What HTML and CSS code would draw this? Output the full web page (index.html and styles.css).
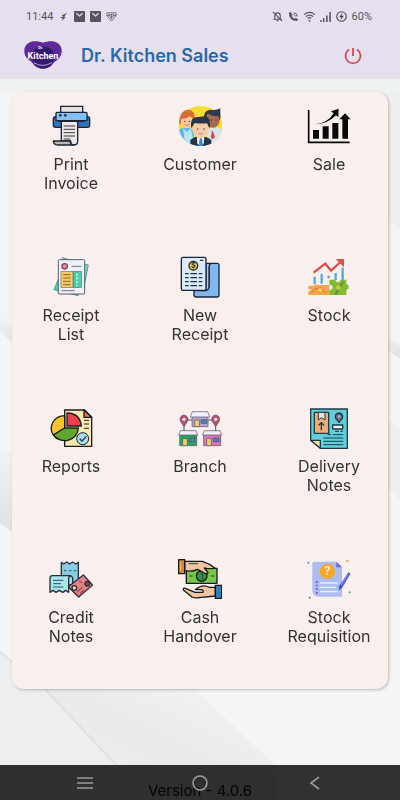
FILE: index.html
```html
<!DOCTYPE html>
<html lang="en">
<head>
    <meta charset="UTF-8">
    <meta name="viewport" content="width=device-width, initial-scale=1.0">
    <title>Dr. Kitchen Sales</title>
    <link rel="stylesheet" href="styles.css">
</head>
<body>
    <svg class="backdrop" viewBox="0 0 400 800" preserveAspectRatio="none" aria-hidden="true">
        <defs>
            <linearGradient id="fold" x1="0" y1="1" x2="1" y2="0">
                <stop offset="0" stop-color="#f1f1f1"/>
                <stop offset="0.5" stop-color="#e9eaea"/>
                <stop offset="1" stop-color="#f5f5f5"/>
            </linearGradient>
            <linearGradient id="shade" x1="0" y1="0" x2="0" y2="1">
                <stop offset="0" stop-color="#f3f3f3"/>
                <stop offset="1" stop-color="#e0e1e1"/>
            </linearGradient>
        </defs>
        <rect width="400" height="800" fill="#f5f5f5"/>
        <path d="M0 79H400V92H0z" fill="#eff3ef"/>
        <path d="M0 92H20V343L0 329z" fill="#f3f4f3"/>
        <path d="M0 315L20 335V350L0 331z" fill="url(#shade)"/>
        <path d="M0 445L20 460V536L0 524z" fill="url(#shade)"/>
        <path d="M0 652L45 689L116 765V800H0z" fill="#eeeeee"/>
        <path d="M45 689H195L275 765V800H116V765z" fill="url(#fold)"/>
        <path d="M0 652L45 689L116 765" fill="none" stroke="#dfe1e1" stroke-width="2"/>
        <path d="M380 92H400V228L380 218z" fill="#eeefef"/>
        <path d="M380 332L400 346V358L380 346z" fill="url(#shade)"/>
        <path d="M380 412L400 428V500L380 480z" fill="#eeefef"/>
    </svg>

    <header class="header">
        <div class="status-bar">
            <div class="status-group">
                <span>11:44</span>
                <svg class="status-icon" viewBox="0 0 12 12"><path d="M10 2L4 5l2 1-4 1 3 1-1 3 4-4-1-1z" fill="#57525c"/></svg>
                <svg class="status-icon" viewBox="0 0 12 12"><rect x="0" y="0" width="12" height="12" rx="1" fill="#57525c"/><path d="M2.500 2.500L6 5.500l3.500-3" fill="none" stroke="#e6e0ee" stroke-width="1.300"/></svg>
                <svg class="status-icon" viewBox="0 0 12 12"><rect x="0" y="0" width="12" height="12" rx="1" fill="#57525c"/><path d="M2.500 2.500L6 5.500l3.500-3" fill="none" stroke="#e6e0ee" stroke-width="1.300"/></svg>
                <svg class="status-icon" viewBox="0 0 12 12"><path d="M1 2h10v3L6 11 1 5zM3 4h6L6 8zM6 4v5M1 5h3m4 0h3" fill="none" stroke="#6b6670" stroke-width="1"/></svg>
            </div>
            <div class="status-group status-right">
                <svg class="status-icon" viewBox="0 0 12 12"><path d="M3 9V5q0-3 3-3t3 3v4M1.500 9h9M5 10.500h2M1 1l10 10" fill="none" stroke="#57525c" stroke-width="1.200"/></svg>
                <svg class="status-icon" viewBox="0 0 12 12"><path d="M1 2l2-1 2 3-1 1.500q1 2 3 3L8.500 7.500 11 9l-1 2Q1 11 1 2z" fill="#57525c"/><path d="M6 2q4 0 4 4M6 4q2 0 2 2" fill="none" stroke="#57525c"/></svg>
                <svg class="status-icon" viewBox="0 0 12 12"><path d="M0 4q6-5 12 0M2 6q4-3 8 0M4 8q2-1.500 4 0" fill="none" stroke="#57525c" stroke-width="1.300"/><circle cx="6" cy="10.500" r="1" fill="#57525c"/></svg>
                <svg class="status-icon" viewBox="0 0 12 12"><path d="M1 12v-2M4 12V8M7.500 12V5M11 12V1" stroke="#57525c" stroke-width="1.700"/></svg>
                <svg class="status-icon" viewBox="0 0 12 12"><circle cx="6" cy="6" r="5.200" fill="none" stroke="#57525c" stroke-width="1.300"/><path d="M7 2L3.500 6.700H6L5 10l3.500-4.700H6z" fill="#3d3942"/></svg>
                <span>60%</span>
            </div>
        </div>
        <div class="title-bar">
            <svg class="logo" viewBox="0 0 114 86" role="img" aria-label="Dr. Kitchen">
                <path d="M57 5C44-1 26-1 16 4-2 12-3 36 8 50c6 9 14 10 19 18 12 20 48 20 60 0 5-8 13-9 19-18 11-14 10-38-8-46-10-5-28-5-41 1z" fill="#5e2a9b"/>
                <path d="M57 16c22 0 34 14 34 30 0 20-18 36-34 36S23 66 23 46c0-16 12-30 34-30z" fill="#33196c"/>
                <path d="M30 65q27 16 54-1" fill="none" stroke="#b9a4df" stroke-width="3"/>
                <text x="50" y="23" text-anchor="middle" class="logo-small">Dr.</text>
                <text x="57" y="53" text-anchor="middle" class="logo-text">Kitchen</text>
            </svg>
            <h1>Dr. Kitchen Sales</h1>
            <button type="button" class="power-btn" aria-label="Log out">
                <svg viewBox="0 0 18 18"><path d="M9 1v8M5 2.500a7.500 7.500 0 1 0 8 0" fill="none" stroke="#cf4a58" stroke-width="1.800"/></svg>
            </button>
        </div>
    </header>

    <main class="menu-card">
        <button type="button" class="menu-item">
            <svg class="menu-icon" viewBox="0 0 132 132">
                <g stroke="#1c2430" stroke-width="4" stroke-linejoin="round">
                    <rect x="13" y="38" width="109" height="32" rx="7" fill="#2f73bb"/>
                    <rect x="21" y="25" width="93" height="25" rx="3" fill="#82bff5"/>
                    <path d="M35 25V7h66v18z" fill="#e9e2e1"/>
                    <path d="M37 52h49v60q0 11-11 11-10 0-10-12H37z" fill="#eee7e6"/>
                    <path d="M13 111h50q1 12 12 12H27q-13 0-14-12z" fill="#bdb7b8"/>
                    <path d="M28 52h76" fill="none"/>
                </g>
                <path d="M39 54h45v10H39z" fill="#eee7e6"/>
                <g fill="#17304f"><circle cx="34" cy="34" r="4"/><circle cx="49" cy="34" r="4"/></g>
                <path d="M44 66h34M44 76h34M44 86h34M44 96h34M44 105h20" stroke="#39393d" stroke-width="3"/>
            </svg>
            <span>Print Invoice</span>
        </button>

        <button type="button" class="menu-item">
            <svg class="menu-icon" viewBox="0 0 132 132">
                <defs><clipPath id="people"><ellipse cx="68" cy="66" rx="66" ry="60"/></clipPath></defs>
                <ellipse cx="68" cy="66" rx="66" ry="60" fill="#fbdc35"/>
                <g clip-path="url(#people)">
                    <path d="M0 80q24-20 48 0v50H0z" fill="#56b7ea"/>
                    <path d="M15 72l12 12 11-12 12 50H22z" fill="#b7e4f5"/>
                    <path d="M88 78q26-18 46 0v50H84z" fill="#d7e6ee"/>
                    <path d="M101 78l6 8 4 14-7 6-6-6 3-14z" fill="#d94552"/>
                </g>
                <ellipse cx="28" cy="53" rx="18" ry="20" fill="#f7c7a0"/>
                <path d="M4 60C0 10 48 6 50 38l-2 14q-4-12-12-15Q24 46 10 45l-2 17z" fill="#d96d38"/>
                <ellipse cx="105" cy="48" rx="20" ry="23" fill="#a66a50"/>
                <path d="M79 43q-4-23 17-26 17 4 31-4v13q3 13-3 24l-3-14q-17 2-31-6-4 5-5 15z" fill="#30384b"/>
                <g clip-path="url(#people)">
                    <path d="M37 108q30-24 63 0v24H37z" fill="#26364a"/>
                    <path d="M57 96h22l-2 22-9 12-10-12z" fill="#fff"/>
                    <path d="M65 103h7l3 23H62z" fill="#3289c7"/>
                </g>
                <ellipse cx="68" cy="77" rx="25" ry="26" fill="#f9cdaa"/>
                <path d="M40 73Q34 38 61 39l22-3q18 8 12 37-6-8-7-15-20 2-38-1-5 8-10 16z" fill="#27344a"/>
                <g fill="#37313b"><circle cx="59" cy="75" r="2"/><circle cx="78" cy="75" r="2"/><circle cx="20" cy="52" r="2"/><circle cx="34" cy="52" r="2"/><circle cx="100" cy="48" r="2"/><circle cx="114" cy="48" r="2"/></g>
                <path d="M61 88q7 5 14 0M22 62q6 4 11 0M101 60q6 4 11 0" fill="none" stroke="#c94f4a" stroke-width="2"/>
            </svg>
            <span>Customer</span>
        </button>

        <button type="button" class="menu-item">
            <svg class="menu-icon" viewBox="0 0 132 132">
                <path d="M5 18v97h123" fill="none" stroke="#080808" stroke-width="5"/>
                <path d="M18 78h18v26H18zM47 67h18v37H47zM76 57h18v47H76zM106 44h17v60h-17zM114 28l17 18H97zM24 61q38-3 56-33l-8-6 23-8-1 26-7-6Q64 59 24 61z" fill="#080808"/>
            </svg>
            <span>Sale</span>
        </button>

        <button type="button" class="menu-item">
            <svg class="menu-icon" viewBox="0 0 132 132">
                <g stroke="#4f6673" stroke-width="2" stroke-linejoin="round">
                    <path d="M40 8l78 22-15 77-60-8z" fill="#75d9bd"/>
                    <path d="M30 67L15 104l72 18 12-30z" fill="#4ed0a9"/>
                    <rect x="28" y="14" width="79" height="103" rx="3" fill="#f0eff5" stroke-width="3"/>
                </g>
                <circle cx="47" cy="34" r="8" fill="#e98fa0" stroke="#863d59" stroke-width="4"/>
                <path d="M68 34h29M37 107h40" stroke="#6c7181" stroke-width="3"/>
                <rect x="36" y="50" width="36" height="47" fill="#f4cc62" stroke="#6b6d5a" stroke-width="2"/>
                <rect x="73" y="50" width="24" height="47" fill="#48d0ae" stroke="#4d756b" stroke-width="2"/>
                <path d="M42 59h23M42 69h23M42 79h23M42 89h23" stroke="#806c36" stroke-width="3"/>
                <path d="M84 56v36" stroke="#e7fff8" stroke-width="4" stroke-dasharray="6 5"/>
            </svg>
            <span>Receipt List</span>
        </button>

        <button type="button" class="menu-item">
            <svg class="menu-icon" viewBox="0 0 132 132">
                <g stroke="#17243b" stroke-width="4" stroke-linejoin="round">
                    <path d="M48 107h28q13 0 17-12V31q1-6 8-6h17q5 0 5 6v89q0 6-6 6H55q-7 0-7-7z" fill="#80b8ee"/>
                    <path d="M84 25h15q-6 3-6 11v58q0 13-14 13h-7l12-14z" fill="#a6d0f7"/>
                    <rect x="10" y="7" width="74" height="99" rx="5" fill="#dbeaf9"/>
                    <circle cx="46" cy="32" r="13" fill="#f3cc32"/>
                </g>
                <text x="46" y="40" text-anchor="middle" class="coin">$</text>
                <path d="M21 56h11m5 0h20m5 0h11M21 68h11m5 0h20m5 0h11M21 80h11m5 0h20m5 0h11M21 92h11m5 0h20m5 0h11M66 16h10" stroke="#27344a" stroke-width="4"/>
            </svg>
            <span>New Receipt</span>
        </button>

        <button type="button" class="menu-item">
            <svg class="menu-icon" viewBox="0 0 132 132">
                <path d="M23 88V65M44 86V56M65 70v-8M86 75V54M107 75V38" stroke="#58a8d8" stroke-width="7"/>
                <path d="M20 53l35-27 17 21 30-27" fill="none" stroke="#df5148" stroke-width="7"/>
                <path d="M86 12h25v25z" fill="#df5148"/>
                <path d="M4 94q10-2 17-2 4-6 13-2h33v30H4V109l10-4-10-4z" fill="#f5a549"/>
                <path d="M14 114l10-13h19l15 13" fill="none" stroke="#ca7439" stroke-width="3"/>
                <circle cx="39" cy="106" r="8" fill="#ffc65a" stroke="#d57c35" stroke-width="2"/>
                <path d="M67 74h18q2 8 8 8t8-8h17v14q7 0 7 8t-7 8v16H67v-15q10-1 10-8t-10-8z" fill="#85ba32"/>
                <path d="M80 119l29-44v11l-20 34z" fill="#549e36"/>
                <circle cx="94" cy="98" r="7" fill="#c5c936"/>
            </svg>
            <span>Stock</span>
        </button>

        <button type="button" class="menu-item">
            <svg class="menu-icon" viewBox="0 0 132 132">
                <g stroke="#1b1d20" stroke-width="4" stroke-linejoin="round">
                    <path d="M47 12h60l21 22v87H47z" fill="#f8e8b2"/>
                    <path d="M105 12v22h23z" fill="#ee7445"/>
                    <path d="M47 66V29a41 38 0 0 0-34 58z" fill="#f5c426"/>
                    <path d="M47 66L13 87a41 38 0 0 0 75-21z" fill="#62a52c"/>
                    <path d="M54 60V21q39 1 43 39z" fill="#ee3f4d"/>
                    <circle cx="101" cy="98" r="18" fill="#a5e0f4" stroke-width="3"/>
                </g>
                <path d="M105 43h15M105 54h15M105 67h15" stroke="#252525" stroke-width="3"/>
                <path d="M92 98l7 7 13-14" fill="none" stroke="#203a49" stroke-width="4"/>
            </svg>
            <span>Reports</span>
        </button>

        <button type="button" class="menu-item">
            <svg class="menu-icon" viewBox="0 0 132 132">
                <path d="M18 76V42h95v34" fill="none" stroke="#5a5068" stroke-width="3"/>
                <g stroke="#554d68" stroke-width="2">
                    <path d="M42 31h48v31H42z" fill="#b6a6cf"/>
                    <path d="M5 85h51v34H5z" fill="#28a45a"/>
                    <path d="M77 85h51v34H77z" fill="#dc72b7"/>
                    <path d="M43 17h46l6 16H37zM7 74h47l5 13H2zM79 74h47l5 13H73z" fill="#f0f0fa"/>
                    <path d="M50 42h14v20H50zM14 98h14v21H14zM86 98h14v21H86z" fill="#f2ce70"/>
                    <path d="M69 41h17v11H69zM34 96h16v11H34zM106 96h17v11h-17z" fill="#4388b6"/>
                    <path d="M18 62L7 45q-4-15 11-18 15 3 11 18zM113 62l-11-17q-4-15 11-18 15 3 11 18z" fill="#b45370"/>
                </g>
                <circle cx="18" cy="40" r="5" fill="#efe1e5"/>
                <circle cx="113" cy="40" r="5" fill="#efe1e5"/>
            </svg>
            <span>Branch</span>
        </button>

        <button type="button" class="menu-item">
            <svg class="menu-icon" viewBox="0 0 132 132">
                <g stroke="#21394a" stroke-width="4" stroke-linejoin="round">
                    <path d="M11 9h110v118H40L11 103z" fill="#61ced9"/>
                    <path d="M11 103h29v24z" fill="#f7dd9a"/>
                    <path d="M22 19h43v63H22z" fill="#efae70"/>
                    <path d="M34 19h20v23l-10-7-10 7z" fill="#e6e5e5" stroke-width="3"/>
                    <path d="M77 57h30v12H77z" fill="#e2f7fa"/>
                    <path d="M96 49L86 37q-4-14 10-16 14 2 10 16z" fill="#856078"/>
                </g>
                <circle cx="96" cy="32" r="4" fill="#61ced9"/>
                <path d="M43 73V50m-8 8l8-8 8 8" fill="none" stroke="#21394a" stroke-width="4"/>
                <path d="M84 76h12m4 0h8M62 86h10m5 0h32M49 96h60M49 106h60M49 116h60" stroke="#21394a" stroke-width="3"/>
            </svg>
            <span>Delivery Notes</span>
        </button>

        <button type="button" class="menu-item">
            <svg class="menu-icon" viewBox="0 0 132 132">
                <g stroke="#26313a" stroke-width="4" stroke-linejoin="round">
                    <path d="M37 16l7 5 9-6 9 6 9-6 9 6 8-5v70H37z" fill="#8ccce2"/>
                    <path d="M3 106V63q0-7 7-7h51q10 0 10 11v17H59v22l-9-6-9 6-10-6-10 6-9-6z" fill="#a9e5eb"/>
                    <path d="M59 84V66q0-9 6-9" fill="none"/>
                    <path d="M103 54l28 30-42 36-31-31z" fill="#e98085"/>
                    <circle cx="76" cy="93" r="7" fill="#f5d5bd"/>
                    <circle cx="115" cy="80" r="7" fill="#8d4b5b"/>
                </g>
                <path d="M45 41h7m8 0h7m7 0h8M12 70h31M12 80h24M12 90h31" stroke="#315461" stroke-width="3"/>
                <path d="M85 104l15-13M93 110l12-11M91 72l7 5" stroke="#682f3b" stroke-width="3"/>
            </svg>
            <span>Credit Notes</span>
        </button>

        <button type="button" class="menu-item">
            <svg class="menu-icon" viewBox="0 0 132 132">
                <g stroke="#16191c" stroke-width="4" stroke-linejoin="round">
                    <path d="M25 34h92v45H25z" fill="#78c64c"/>
                    <circle cx="71" cy="57" r="16" fill="#3b8e4b"/>
                    <path d="M20 13h53q21 6 38 21L88 35l-9-2 11 14q-4 6-11 1L59 37q-16 8-39 4z" fill="#f5c4a1"/>
                    <path d="M2 8h18v42H2z" fill="#dc8736"/>
                    <path d="M112 91H94q-15-8-30-1l-12 8h16q10 1 7 8H51L22 94q-9-2-5 6l25 20q10 4 21 2l49-5z" fill="#f5c4a1"/>
                    <path d="M112 85h19v39h-19z" fill="#347eb3"/>
                </g>
                <path d="M32 20h28M34 57h10m55 0h10M68 50q9 0 5 7t6 9" fill="none" stroke="#20442b" stroke-width="3"/>
                <path d="M7 14v28" stroke="#ffc376" stroke-width="3"/>
            </svg>
            <span>Cash Handover</span>
        </button>

        <button type="button" class="menu-item">
            <svg class="menu-icon" viewBox="0 0 132 132">
                <path d="M22 14h66l17 17v88H35q-19 0-19-20V20q0-6 6-6z" fill="#acbdf0"/>
                <path d="M88 14v17h17z" fill="#6468d5"/>
                <circle cx="61" cy="43" r="23" fill="#f5a72b"/>
                <text x="61" y="55" text-anchor="middle" class="question">?</text>
                <path d="M38 78h54M38 91h49M38 104h54" stroke="#e8edff" stroke-width="4"/>
                <path d="M29 72v39" stroke="#5360c8" stroke-width="5" stroke-dasharray="5 6"/>
                <path d="M125 46l5 4-25 43-10 7 1-12z" fill="#414fc1"/>
                <path d="M124 49l-21 36" stroke="#828bea" stroke-width="4"/>
                <circle cx="4" cy="17" r="3" fill="#5b8194"/><circle cx="121" cy="12" r="4" fill="#efae65"/>
                <circle cx="128" cy="106" r="3" fill="#48a581"/><circle cx="8" cy="122" r="3" fill="#7c648f"/>
            </svg>
            <span>Stock Requisition</span>
        </button>
    </main>

    <p class="version">Version - 4.0.6</p>

    <nav class="nav-bar" aria-label="System navigation">
        <button type="button" aria-label="Recent apps"><svg viewBox="0 0 18 18"><path d="M1 4h16M1 9h16M1 14h16" stroke="#9b9b9b" stroke-width="1.500"/></svg></button>
        <button type="button" aria-label="Home"><svg viewBox="0 0 18 18"><circle cx="9" cy="9" r="7" fill="none" stroke="#9b9b9b" stroke-width="1.600"/></svg></button>
        <button type="button" aria-label="Back"><svg viewBox="0 0 18 18"><path d="M13 3L5 9l8 6" fill="none" stroke="#9b9b9b" stroke-width="1.600"/></svg></button>
    </nav>
</body>
</html>
```

FILE: styles.css
```css
* {
    margin: 0;
    padding: 0;
    box-sizing: border-box;
}

body {
    min-height: 100vh;
    display: flex;
    flex-direction: column;
    background-color: #f5f5f5;
    color: #333;
    font-family: 'Inter', 'Liberation Sans', sans-serif;
}

button {
    border: none;
    background: none;
    color: inherit;
    font-family: inherit;
    cursor: pointer;
}

.backdrop {
    position: fixed;
    top: 0;
    left: 0;
    width: 100%;
    height: 100%;
    z-index: -1;
}

.header {
    background-color: #e6e0ee;
}

.status-bar {
    display: flex;
    justify-content: space-between;
    align-items: center;
    height: 32px;
    padding: 0 28px 0 26px;
    color: #57525c;
    font-family: 'Roboto', sans-serif;
    font-size: 11px;
}

.status-group {
    display: flex;
    align-items: center;
    gap: 5px;
}

.status-icon {
    width: 11px;
    height: 11px;
}

.title-bar {
    display: flex;
    align-items: center;
    height: 47px;
    padding: 0 38px 0 24px;
}

.logo {
    width: 38px;
    height: 29px;
}

.logo-text {
    fill: #fff;
    font-family: 'Roboto', sans-serif;
    font-size: 27px;
    font-weight: 700;
}

.logo-small {
    fill: #fff;
    font-family: 'Roboto', sans-serif;
    font-size: 12px;
    font-weight: 700;
}

h1 {
    flex: 1;
    margin-left: 19px;
    color: #2c68a6;
    font-size: 18px;
    font-weight: 600;
}

.power-btn {
    width: 18px;
    height: 18px;
}

.menu-card {
    display: grid;
    grid-template-columns: repeat(3, 86px);
    justify-content: space-between;
    row-gap: 19px;
    margin: 13px 12px 0;
    padding: 12px 16px 0;
    background-color: #f9efed;
    border-radius: 12px;
    box-shadow: 1px 1px 3px rgba(90, 110, 105, 0.4);
}

.menu-item {
    display: flex;
    flex-direction: column;
    align-items: center;
    gap: 7px;
    min-height: 132px;
    font-size: 16px;
    line-height: 19px;
}

.menu-icon {
    width: 44px;
    height: 44px;
}

.coin {
    fill: #27344a;
    font-size: 22px;
    font-weight: 700;
}

.question {
    fill: #fff3d0;
    font-size: 34px;
    font-weight: 600;
}

.version {
    margin-top: auto;
    color: #111;
    font-size: 15px;
    line-height: 18px;
    text-align: center;
}

.nav-bar {
    position: fixed;
    right: 0;
    bottom: 0;
    left: 0;
    display: flex;
    justify-content: space-around;
    height: 35px;
    padding: 0 27px;
    background-color: rgba(0, 0, 0, 0.8);
}

.nav-bar button {
    display: flex;
    justify-content: center;
    align-items: center;
    width: 48px;
    height: 35px;
}

.nav-bar svg {
    width: 18px;
    height: 18px;
}
```
